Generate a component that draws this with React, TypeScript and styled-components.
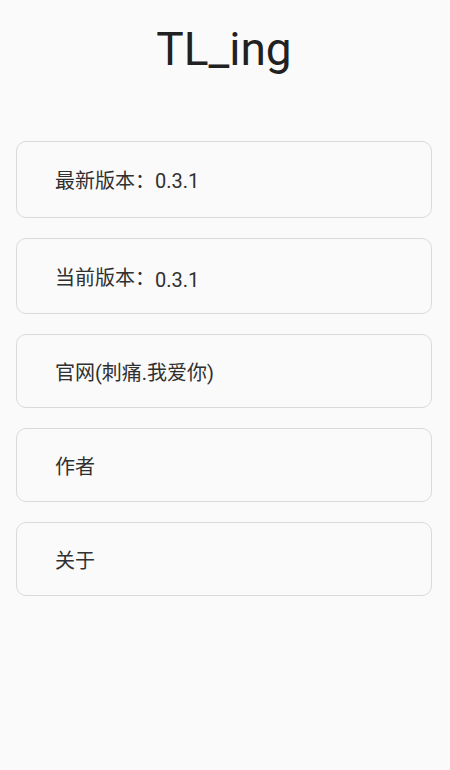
import styled, { createGlobalStyle } from "styled-components";

const GlobalStyle = createGlobalStyle`
  html, body {
    margin: 0;
    padding: 0;
    background: #fafafa;
  }
  body {
    font-family: Roboto, "Noto Sans CJK SC", sans-serif;
  }
`;

const Page = styled.div`
  width: 450px;
  min-height: 770px;
  background: #fafafa;
  display: flex;
  flex-direction: column;
  box-sizing: border-box;
  padding: 0 18px 0 16px;
`;

const Title = styled.h1`
  margin: 26px 0 0;
  font-family: Roboto, sans-serif;
  font-weight: 400;
  font-size: 46px;
  line-height: 46px;
  color: #212121;
  text-align: center;
`;

const List = styled.div`
  display: flex;
  flex-direction: column;
  gap: 20px;
  margin-top: 69px;
`;

const Card = styled.div<{ $height: number }>`
  height: ${(p) => p.$height}px;
  box-sizing: border-box;
  border: 1.5px solid #dadada;
  border-radius: 10px;
  background: #fafafa;
  display: flex;
  align-items: center;
  padding: 3px 0 0 38px;
`;

const Label = styled.span`
  font-family: Roboto, "Noto Sans CJK SC", sans-serif;
  font-size: 20px;
  line-height: 24px;
  color: #303030;
`;

const Value = styled.span<{ $drop?: number }>`
  font-family: Roboto, sans-serif;
  font-size: 20px;
  line-height: 24px;
  color: #303030;
  position: relative;
  top: ${(p) => p.$drop || 0}px;
`;

const items = [
  { label: "最新版本：", value: "0.3.1", height: 77, drop: 0 },
  { label: "当前版本：", value: "0.3.1", height: 76, drop: 2 },
  { label: "官网(刺痛.我爱你)", height: 74 },
  { label: "作者", height: 74 },
  { label: "关于", height: 74 },
];

export default function App() {
  return (
    <>
      <GlobalStyle />
      <Page>
        <Title>TL_ing</Title>
        <List>
          {items.map((it) => (
            <Card key={it.label} $height={it.height}>
              <Label>{it.label}</Label>
              {it.value && <Value $drop={it.drop}>{it.value}</Value>}
            </Card>
          ))}
        </List>
      </Page>
    </>
  );
}
